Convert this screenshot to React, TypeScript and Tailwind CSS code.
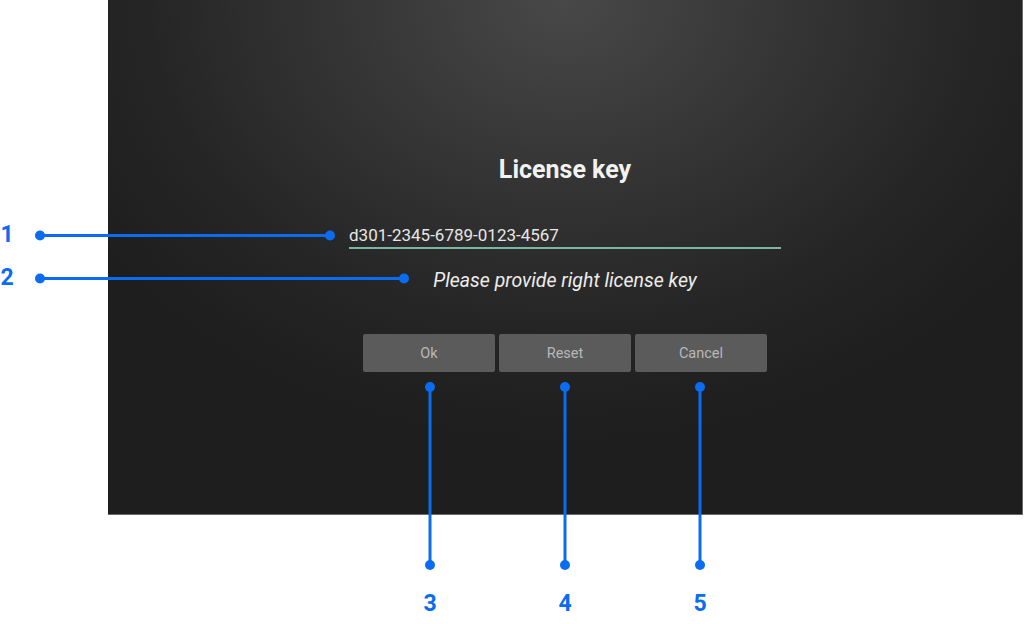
import React from "react";

const BLUE = "#0a6cf0";

const Callouts: React.FC = () => (
  <>
    <svg
      className="absolute inset-0 pointer-events-none"
      width={1024}
      height={624}
      viewBox="0 0 1024 624"
    >
      <g stroke={BLUE} strokeWidth={3} fill={BLUE}>
        <line x1={40} y1={235.5} x2={330} y2={235.5} />
        <circle cx={40} cy={235.5} r={5} stroke="none" />
        <circle cx={330} cy={235.5} r={5} stroke="none" />

        <line x1={40} y1={278.5} x2={404} y2={278.5} />
        <circle cx={40} cy={278.5} r={5} stroke="none" />
        <circle cx={404} cy={278.5} r={5} stroke="none" />

        {[430, 565, 700].map((x) => (
          <g key={x}>
            <line x1={x} y1={387} x2={x} y2={565} />
            <circle cx={x} cy={387} r={5} stroke="none" />
            <circle cx={x} cy={565} r={5} stroke="none" />
          </g>
        ))}
      </g>
    </svg>
    <span className="absolute left-[0px] top-[221px] w-[14px] text-center text-[23px] leading-[28px] font-bold text-[#0a6cf0] font-['Roboto',sans-serif]">
      1
    </span>
    <span className="absolute left-[0px] top-[264px] w-[14px] text-center text-[23px] leading-[28px] font-bold text-[#0a6cf0] font-['Roboto',sans-serif]">
      2
    </span>
    {[
      { n: "3", cls: "left-[420px]" },
      { n: "4", cls: "left-[555px]" },
      { n: "5", cls: "left-[690px]" },
    ].map(({ n, cls }) => (
      <span
        key={n}
        className={`absolute ${cls} top-[590px] w-[20px] text-center text-[23px] leading-[28px] font-bold text-[#0a6cf0] font-['Roboto',sans-serif]`}
      >
        {n}
      </span>
    ))}
  </>
);

const DialogButton: React.FC<{ label: string }> = ({ label }) => (
  <button className="w-[132px] h-[38px] pt-[2px] rounded-[2px] bg-[#5b5b5b] text-[#b8b8b8] text-[14.5px] font-['Roboto',sans-serif]">
    {label}
  </button>
);

export default function App() {
  return (
    <div className="relative w-[1024px] h-[624px] bg-white overflow-hidden">
      <div className="ml-[108px] w-[915px] h-[515px] border-r border-b border-[#6a6a6a] bg-[radial-gradient(ellipse_560px_440px_at_50%_0%,#484848_0%,#353535_40%,#252525_75%,#1e1e1e_100%)] flex flex-col items-center font-['Roboto',sans-serif]">
        <h1 className="mt-[155px] text-[25px] leading-[30px] font-bold text-[#f2f2f2]">
          License key
        </h1>

        <div className="mt-[40px] w-[432px] pb-[2px] border-b-2 border-[#7fb3a6]">
          <span className="block text-[17px] leading-[20px] text-[#e6e6e6]">
            d301-2345-6789-0123-4567
          </span>
        </div>

        <p className="mt-[20px] text-[19.5px] leading-[24px] italic text-[#ededed]">
          Please provide right license key
        </p>

        <div className="mt-[41px] flex gap-[4px]">
          <DialogButton label="Ok" />
          <DialogButton label="Reset" />
          <DialogButton label="Cancel" />
        </div>
      </div>

      <Callouts />
    </div>
  );
}
